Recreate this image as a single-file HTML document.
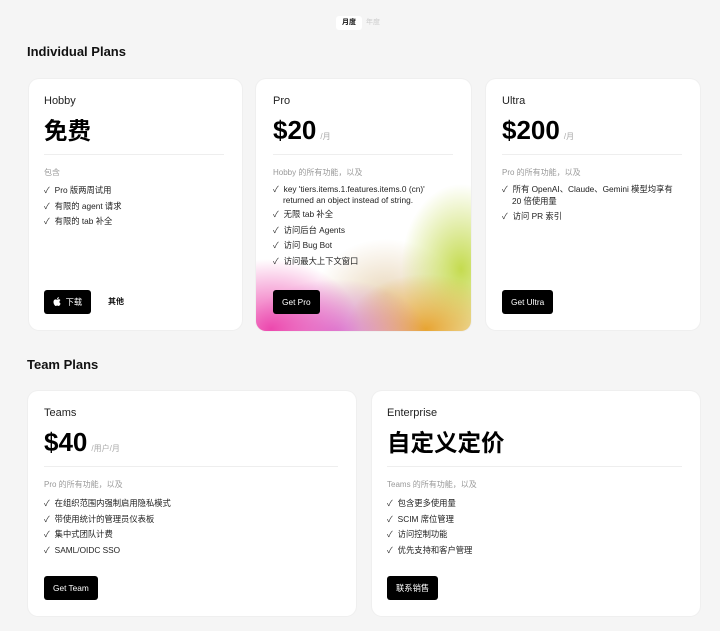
<!DOCTYPE html>
<html><head><meta charset="utf-8"><style>
*{margin:0;padding:0;box-sizing:border-box}
body{width:720px;height:631px;background:#f5f5f5;font-family:"Liberation Sans","Noto Sans CJK SC",sans-serif;color:#111;position:relative;overflow:hidden}
.a{position:absolute}
.card{position:absolute;background:#fff;border-radius:10px;box-shadow:0 0 0 1px #efefef}
.t{position:absolute;left:15px;font-size:11px;color:#222}
.p{position:absolute;left:15px;font-size:26px;line-height:30px;height:30px;font-weight:bold;color:#000;white-space:nowrap}
.p.c{font-size:23.5px;top:37px!important}
.p small{font-size:8px;color:#aaa;font-weight:normal;margin-left:4px}
.hr{position:absolute;left:15px;right:18px;height:1px;background:#eee}
.s{position:absolute;left:15px;font-size:8px;color:#999}
ul{position:absolute;left:15px;list-style:none;font-size:8.3px;color:#222}
li{height:15.7px;line-height:15.7px;white-space:nowrap}
li:before{content:"✓";margin-right:5px}
.n:before{content:""!important;margin:0!important}
.b{position:absolute;left:15px;height:24px;background:#000;color:#fff;font-size:8.3px;border-radius:3px;line-height:24px;padding:0 9px;white-space:nowrap}
.h{position:absolute;left:27px;font-size:13px;font-weight:bold}
</style></head><body>
<div class="a" style="left:336px;top:16px;width:26px;height:14px;background:#fff;border-radius:3px;font-size:7px;line-height:14px;text-align:center;font-weight:bold">月度</div>
<div class="a" style="left:366px;top:16px;font-size:7px;line-height:14px;color:#ccc">年度</div>
<div class="h" style="top:44px">Individual Plans</div>

<div class="card" style="left:29px;top:79px;width:213px;height:251px">
<div class="t" style="top:16px">Hobby</div>
<div class="p c" style="top:36px">免费</div>
<div class="hr" style="top:75px"></div>
<div class="s" style="top:88px">包含</div>
<ul style="top:104px"><li>Pro 版两周试用</li><li>有限的 agent 请求</li><li>有限的 tab 补全</li></ul>
<div class="b" style="top:211px;width:47px;padding:0 0 0 9px"><svg width="8" height="9" viewBox="0 0 16 19" style="vertical-align:-1px"><path fill="#fff" d="M13.2 10.1c0-2.3 1.9-3.4 2-3.5-1.1-1.6-2.8-1.8-3.4-1.8-1.4-.1-2.8.9-3.5.9-.7 0-1.8-.8-3-.8C3.7 4.9 2.2 5.8 1.4 7.2c-1.700 2.9-.4 7.2 1.2 9.5.8 1.1 1.7 2.4 2.9 2.3 1.2 0 1.6-.7 3-.7s1.8.7 3 .7c1.3 0 2.1-1.1 2.8-2.3.9-1.3 1.3-2.6 1.3-2.6s-2.4-.9-2.4-4zM10.9 3.2c.6-.8 1.1-1.9 1-3-.9 0-2.1.6-2.700 1.4-.6.7-1.1 1.8-1 2.9 1 .1 2.1-.5 2.700-1.3z"/></svg>&nbsp;&nbsp;下载</div>
<div class="a" style="left:70px;top:211px;width:34px;height:24px;line-height:24px;text-align:center;font-size:8px;font-weight:bold">其他</div>
</div>

<div class="card" style="left:256px;top:79px;width:215px;height:252px;overflow:hidden;background:
radial-gradient(ellipse 90px 70px at 15px 250px,rgba(236,64,170,.95),transparent),
radial-gradient(ellipse 90px 55px at 80px 255px,rgba(200,80,200,.7),transparent),
radial-gradient(ellipse 80px 55px at 170px 250px,rgba(230,160,40,.95),transparent),
radial-gradient(ellipse 60px 85px at 205px 190px,rgba(190,215,60,.9),transparent),
radial-gradient(ellipse 70px 55px at 130px 215px,rgba(225,200,160,.7),transparent),#fff">
<div class="t" style="top:16px;left:17px">Pro</div>
<div class="p" style="top:36px;left:17px">$20<small>/月</small></div>
<div class="hr" style="top:75px;left:17px"></div>
<div class="s" style="top:88px;left:17px">Hobby 的所有功能，以及</div>
<ul style="top:104px;left:17px"><li style="height:12px;line-height:12px">key 'tiers.items.1.features.items.0 (cn)'</li><li style="height:12px;line-height:10px;padding-left:10px" class="n">returned an object instead of string.</li><li>无限 tab 补全</li><li>访问后台 Agents</li><li>访问 Bug Bot</li><li>访问最大上下文窗口</li></ul>
<div class="b" style="top:211px;left:17px">Get Pro</div>
</div>

<div class="card" style="left:486px;top:79px;width:214px;height:251px">
<div class="t" style="top:16px;left:16px">Ultra</div>
<div class="p" style="top:36px;left:16px">$200<small>/月</small></div>
<div class="hr" style="top:75px;left:16px"></div>
<div class="s" style="top:88px;left:16px">Pro 的所有功能，以及</div>
<ul style="top:104px;left:16px"><li style="height:12px;line-height:12px">所有 OpenAI、Claude、Gemini 模型均享有</li><li class="n" style="height:14px;line-height:12px;padding-left:10px">20 倍使用量</li><li>访问 PR 索引</li></ul>
<div class="b" style="top:211px;left:16px">Get Ultra</div>
</div>

<div class="h" style="top:357px">Team Plans</div>

<div class="card" style="left:28px;top:391px;width:328px;height:225px">
<div class="t" style="top:16px;left:16px">Teams</div>
<div class="p" style="top:36px;left:16px">$40<small>/用户/月</small></div>
<div class="hr" style="top:75px;left:16px"></div>
<div class="s" style="top:88px;left:16px">Pro 的所有功能，以及</div>
<ul style="top:105px;left:16px"><li>在组织范围内强制启用隐私模式</li><li>带使用统计的管理员仪表板</li><li>集中式团队计费</li><li>SAML/OIDC SSO</li></ul>
<div class="b" style="top:185px;left:16px">Get Team</div>
</div>

<div class="card" style="left:372px;top:391px;width:328px;height:225px">
<div class="t" style="top:16px">Enterprise</div>
<div class="p c" style="top:36px">自定义定价</div>
<div class="hr" style="top:75px"></div>
<div class="s" style="top:88px">Teams 的所有功能，以及</div>
<ul style="top:105px"><li>包含更多使用量</li><li>SCIM 席位管理</li><li>访问控制功能</li><li>优先支持和客户管理</li></ul>
<div class="b" style="top:185px">联系销售</div>
</div>
</body></html>
